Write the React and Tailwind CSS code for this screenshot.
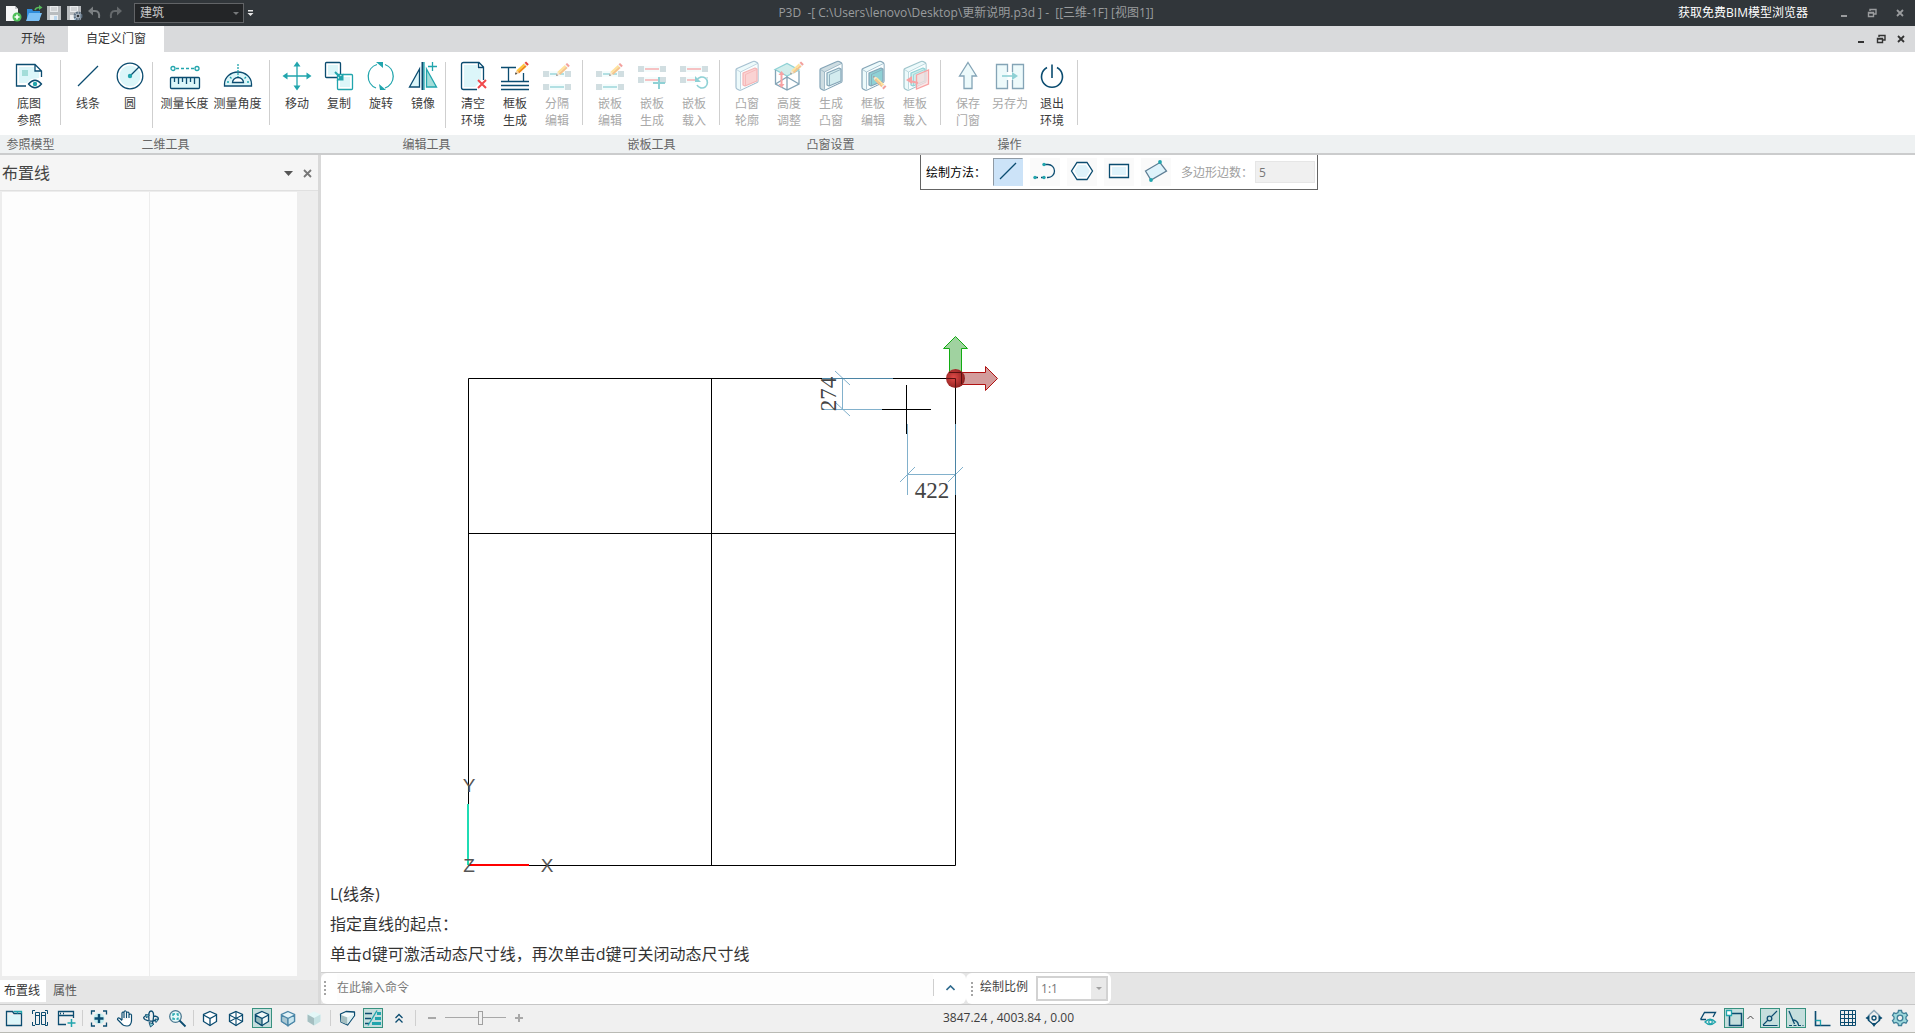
import React, { useState } from "react";
import clsx from "clsx";

const NAVY = "#0b4c70", TEAL = "#21a5ad", LIGHT = "#dcf6f9", MINT = "#a3ddd9", RED = "#f0494b";

function Svg({ size = 32, className, children }) {
  return (
    <svg width={size} height={size} viewBox={`0 0 ${size} ${size}`} fill="none" stroke={NAVY} strokeWidth="1.3" className={clsx("shrink-0", className)} aria-hidden="true">
      {children}
    </svg>
  );
}

/* ---------- shared icon pieces ---------- */
function Pencil({ x, y, down }) {
  return (
    <g transform={`translate(${x} ${y}) rotate(${down ? 45 : -43})`} stroke="none">
      <path d="M0 0 L4 -2 V2 Z" fill="#f4cfa0" />
      <path d="M0 0 L2 -1.2 V1.2 Z" fill="#2d3338" />
      <path d="M4 -2H14V0H4Z" fill="#ffc83c" />
      <path d="M4 0H14V2H4Z" fill="#f08b1b" />
      <path d="M14 -2h1v4h-1z" fill="#e8e8e8" />
      <path d="M15 -2h2v4h-2z" fill="#e8433c" />
    </g>
  );
}

function Blocks({ y1, y2, line1 = TEAL, line2 = TEAL }) {
  return (
    <g stroke="none">
      {[y1, y2].map((y, i) => (
        <g key={y}>
          <path d={`M8 ${y}h16v6h-16z`} fill="#eafafa" />
          <path d={`M2 ${y}h6v6h-6zM24 ${y}h6v6h-6z`} fill="#a5bfc5" />
          <path d={`M9 ${y + 3}H23`} stroke={i ? line2 : line1} strokeWidth="1.3" />
        </g>
      ))}
    </g>
  );
}

function Slab({ side = LIGHT, inner = MINT, edge = NAVY, innerEdge = TEAL }) {
  return (
    <g strokeLinejoin="round" strokeWidth="1.2">
      <path d="M5 10Q5 9 6 8.500L22 1.500Q23 1 24 1.500L26 2.500Q27 3 27 4.500V21Q27 22 26 22.500L10 30Q9 30.500 8 30L6 29Q5 28.500 5 27Z" fill={side} stroke={edge} />
      <path d="M10 12L26.500 4V21.500L10 29.500Z" fill="#f4fdfe" stroke="none" />
      <path d="M9.500 29V12L5.500 9.500M9.500 12L26.500 3.500" stroke={edge} strokeWidth="0.600" />
      <path d="M12 13L24 8L26 9V21L14 26L12 25Z" fill={inner} stroke={innerEdge} />
      <path d="M14.500 26V14.500L25.500 9.500" stroke={innerEdge} strokeWidth="0.800" />
    </g>
  );
}

/* ---------- ribbon icons ---------- */
const ribbonIcons = {
  underlay: <><path d="M6 7h16v5h4v6l-8 1-4 4H6z" fill={LIGHT} stroke="none" /><path d="M13 26H3.500V4.500H22L28.500 11V17M22 4.500V11H28.500" /><path d="M9 10h6v6H9z" fill={MINT} stroke="none" /><path d="M15.500 24Q22 16.500 28.500 24Q22 31.500 15.500 24Z" fill="#fff" /><circle cx="22" cy="24" r="2.200" fill={TEAL} stroke="none" /></>,
  line: <path d="M6 26L26 6" />,
  circle: <><circle cx="16" cy="16" r="12.800" fill="#fff" /><circle cx="16" cy="16" r="10.500" fill={LIGHT} stroke="none" /><path d="M16 16L25 7" /><circle cx="16" cy="16" r="2.200" fill={TEAL} stroke="none" /></>,
  length: <><rect x="1.500" y="17.500" width="29" height="11" rx="1" fill={LIGHT} /><path d="M5.500 18v4M9.500 18v6M13.500 18v4M17.500 18v6M21.500 18v4M25.500 18v6" /><g stroke={TEAL}><circle cx="4" cy="8.500" r="2" /><circle cx="28" cy="8.500" r="2" /><path d="M7 8.500H25" strokeDasharray="3 2" /></g></>,
  angle: <><path d="M2.500 26V24A13.500 12 0 0 1 29.500 24V26Z" fill={LIGHT} /><path d="M10.500 22.500A5.500 5 0 0 1 21.500 22.500Z" fill="#fff" /><path d="M16 4V17" stroke={TEAL} strokeDasharray="2 1" /><path d="M5 22h2M27 22h-2M8 17l1.500 1.500M24 17l-1.500 1.500" stroke={TEAL} /></>,
  move: <><path d="M16 4V28M4 16H28" stroke={TEAL} /><path d="M16 1.500l3.500 5h-7zM16 30.500l3.500-5h-7zM1.500 16l5-3.500v7zM30.500 16l-5-3.500v7z" fill={TEAL} stroke="none" /></>,
  copy: <><rect x="2.500" y="2.500" width="15" height="15" rx="1" fill="#fff" /><path d="M5 5h10v10H5z" fill={LIGHT} stroke="none" /><rect x="14.500" y="14.500" width="15" height="15" rx="1" fill="#fff" stroke={TEAL} /><path d="M17 17h10v10H17z" fill={LIGHT} stroke="none" /><path d="M12 12L18 18" stroke={TEAL} strokeWidth="2" /><path d="M20.500 20.500v-7l-7 7z" fill={TEAL} stroke="none" /></>,
  rotate: <g stroke={TEAL}><path d="M11 28A12.500 12.500 0 0 1 12 4.500M20 4.500A12.500 12.500 0 0 1 20 28" /><path d="M11 2h7v6zM21 30h-6l-1-6z" fill={TEAL} stroke="none" /></g>,
  mirror: <><path d="M2.500 27L12.500 9V27Z" fill={LIGHT} /><path d="M15.500 2V30" strokeWidth="2" /><path d="M17 2V30" stroke={TEAL} /><path d="M19.500 9L29.500 27H19.500Z" fill={MINT} stroke={TEAL} /><path d="M25.500 2v9M21 6.500h9" stroke={TEAL} /></>,
  clear: <><path d="M7 5h13v4h4v12l-6 6H7z" fill={LIGHT} stroke="none" /><path d="M20 29.500H6.500Q4.500 29.500 4.500 27.500V4.500Q4.500 2.500 6.500 2.500H22L26.500 7V20M21.500 3V7.500H26" /><path d="M21 20l8 8M29 20l-8 8" stroke={RED} strokeWidth="2" /></>,
  frame: <><path d="M2 7.500H17M9.500 7.500V21M24.500 13V21M2 21.500H30M2 25.500H30M2 29.500H30" /><Pencil x={16} y={14.500} /></>,
  split: <><Blocks y1={11} y2={24} /><Pencil x={15} y={16} /></>,
  panelEdit: <><Blocks y1={11} y2={24} /><Pencil x={15} y={16} /></>,
  panelMake: <><Blocks y1={6} y2={17} line1={RED} line2={RED} /><path d="M23 17v12M17 23h12" stroke={TEAL} strokeWidth="2" /></>,
  panelLoad: <><Blocks y1={6} y2={17} line1={RED} line2={RED} /><circle cx="24" cy="23" r="7" fill="#fff" stroke="none" /><path d="M19 20A5.500 5.500 0 1 1 19 25" stroke={TEAL} strokeWidth="1.600" /><path d="M17 16v6h6z" fill={TEAL} stroke="none" /></>,
  bayOutline: <Slab inner="#f7a9a9" innerEdge="#ee6a6c" edge="#4f83a3" />,
  bayHeight: <><path d="M2 9.500L14 3.500L26 10L14 16Z" fill={MINT} stroke={TEAL} /><path d="M2.500 10V24L14 30L26 24V11M14 16V30M2.500 24L14 17L26 24" /><path d="M8.500 13V26" stroke={RED} strokeWidth="2" /><path d="M8.500 11l3 4h-6zM8.500 28l3-4h-6z" fill={RED} stroke="none" /><Pencil x={17} y={14.500} /></>,
  bayMake: <Slab side="#9fbcc6" inner="#a9dbe0" innerEdge={NAVY} />,
  bayEdit: <><Slab inner={TEAL} innerEdge={NAVY} /><Pencil x={16} y={16} down /></>,
  bayLoad: <><Slab edge="#3f8a98" /><path d="M17.500 15L29.500 10V24L17.500 29Z" fill="#f9b9ba" fillOpacity="0.700" stroke={RED} /><path d="M19 23L11 21" stroke={RED} strokeWidth="2" /><path d="M7 20l6-4v8z" fill={RED} stroke="none" /></>,
  save: <path d="M16 2.500L24.500 16H20V28.500H12V16H7.500Z" fill={LIGHT} />,
  saveAs: <><path d="M13.500 12V4.500H2.500V28.500H13.500V20M18.500 12V4.500H29.500V28.500H18.500V20" fill={LIGHT} /><path d="M8 16H20" stroke={TEAL} strokeWidth="1.600" /><path d="M24 16l-6-4v8z" fill={TEAL} stroke="none" /></>,
  exit: <path d="M11 7.500A10.500 10.500 0 1 0 21 7.500M16 4.500V18" strokeWidth="1.600" />,
};

const ribbonGroups = [
  { title: "参照模型", first: true, sets: [[["underlay", "底图", "参照"]]] },
  { title: "二维工具", sets: [[["line", "线条"], ["circle", "圆"]], [["length", "测量长度"], ["angle", "测量角度"]]] },
  { title: "编辑工具", sets: [[["move", "移动"], ["copy", "复制"], ["rotate", "旋转"], ["mirror", "镜像"]], [["clear", "清空", "环境"], ["frame", "框板", "生成"], ["split", "分隔", "编辑", true]]] },
  { title: "嵌板工具", sets: [[["panelEdit", "嵌板", "编辑", true], ["panelMake", "嵌板", "生成", true], ["panelLoad", "嵌板", "载入", true]]] },
  { title: "凸窗设置", sets: [[["bayOutline", "凸窗", "轮廓", true], ["bayHeight", "高度", "调整", true], ["bayMake", "生成", "凸窗", true], ["bayEdit", "框板", "编辑", true], ["bayLoad", "框板", "载入", true]]] },
  { title: "操作", sets: [[["save", "保存", "门窗", true], ["saveAs", "另存为", "", true], ["exit", "退出", "环境"]]] },
];

function RibbonButton({ icon, top, bottom, disabled }) {
  return (
    <button type="button" disabled={disabled}
            className={clsx("flex flex-col items-center text-xs leading-[17px] whitespace-nowrap", top.length > 3 ? "w-[53px]" : "w-[42px]", disabled ? "text-[#a9a9a9]" : "text-[#3c3c3c]")}>
      <Svg className={disabled ? "opacity-50" : ""}>{ribbonIcons[icon]}</Svg>
      <span className="mt-[3px]">{top}</span>
      {bottom && <span>{bottom}</span>}
    </button>
  );
}

function Ribbon() {
  return (
    <div className="flex shrink-0 border-b-2 border-[#cbcccd] bg-white">
      {ribbonGroups.map((g) => (
        <section key={g.title} className="flex flex-col">
          <div className="flex h-[83px] pt-2">
            {g.sets.map((set, i) => (
              <div key={i} className={clsx("flex", g.first ? "pr-[10px] pl-2" : i === g.sets.length - 1 ? (g.title === "二维工具" ? "px-[5px]" : "pr-1 pl-[6px]") : "pr-px pl-[6px]")}>
                {set.map(([icon, top, bottom, off]) => <RibbonButton key={icon} icon={icon} top={top} bottom={bottom} disabled={off} />)}
              </div>
            )).flatMap((el, i) => i ? [<span key={"s" + i} className="mt-[2px] h-[66px] w-px bg-[#cfcfcf]" />, el] : [el])}
            <span className="h-[65px] w-px bg-[#cfcfcf]" />
          </div>
          <h2 className="h-[18px] bg-[#eef1f2] text-center text-xs leading-[19px] text-[#666]">{g.title}</h2>
        </section>
      ))}
      <div className="mt-[83px] h-[18px] flex-1 bg-[#eef1f2]" />
    </div>
  );
}

/* ---------- title bar ---------- */
function WindowButtons({ className, gap }) {
  return (
    <div className={clsx("flex items-center", gap, className)}>
      <button type="button" aria-label="最小化"><svg width="10" height="10"><path d="M2 7h6v2H2z" fill="currentColor" /></svg></button>
      <button type="button" aria-label="还原"><svg width="10" height="10" fill="none" stroke="currentColor"><path d="M3 3V1.500H9V6H7M3 1.500H9" strokeWidth="1.400" /><path d="M1.500 4.500h5v4h-5zM1.500 5h5" strokeWidth="1.400" /></svg></button>
      <button type="button" aria-label="关闭"><svg width="10" height="10" fill="none" stroke="currentColor" strokeWidth="1.800"><path d="M2 2l6 6M8 2l-6 6" /></svg></button>
    </div>
  );
}

function Floppy({ gear }) {
  return <>
    <path d="M0 1h14v14H0z" fill="#b9bcbf" stroke="none" />
    <path d="M3 1h8v6H3z" fill="#e8eaec" stroke="none" /><path d="M4 3h6M4 5h6" stroke="#b9bcbf" strokeWidth="1" />
    <path d="M3 10h8v5H3z" fill="#eceef0" stroke="none" /><path d="M7 11h3v4H7z" fill="#bcd7ee" stroke="none" />
    {gear && <><circle cx="11" cy="11" r="3.500" fill="#aeb9c5" stroke="#5d6f80" strokeWidth="2" strokeDasharray="2 0.800" /><circle cx="11" cy="11" r="1.300" fill="#33373a" stroke="none" /></>}
  </>;
}

function TitleBar() {
  return (
    <header className="flex h-[26px] shrink-0 items-center bg-[#31363a] text-xs text-[#9a9c9e]">
      <div className="flex items-center gap-1 pl-[5px]">
        <button type="button" aria-label="新建"><Svg size={17}><path d="M1 1h9l3 3v12H1z" fill="#f5f6f7" stroke="none" /><path d="M10 1v3h3z" fill="#c6c9cc" stroke="none" /><circle cx="12" cy="12" r="4.500" fill="#4fbf5a" stroke="none" /><path d="M12 9.500v5M9.500 12h5" stroke="#fff" strokeWidth="1.600" /></Svg></button>
        <button type="button" aria-label="打开"><Svg size={17}><path d="M1 4h5l1 2h7v9H1z" fill="#2f8cdb" stroke="none" /><path d="M3 8h13l-3 8H0z" fill="#7cc0f5" stroke="none" /><path d="M9 5Q10 2 14 2.500" stroke="#58b95c" strokeWidth="1.600" /><path d="M13 0l3.500 2.500L13 5z" fill="#58b95c" stroke="none" /></Svg></button>
        <button type="button" aria-label="保存"><Svg size={16}><Floppy /></Svg></button>
        <button type="button" aria-label="另存"><Svg size={16}><Floppy gear /></Svg></button>
        <button type="button" aria-label="撤销"><Svg size={16}><path d="M4 6H8Q13 6 12 13" stroke="#7b7f82" strokeWidth="2" /><path d="M1 6l5-4.500v9z" fill="#7b7f82" stroke="none" /></Svg></button>
        <button type="button" aria-label="重做"><Svg size={16}><path d="M12 6H8Q3 6 4 13" stroke="#65696c" strokeWidth="2" /><path d="M15 6l-5-4.500v9z" fill="#65696c" stroke="none" /></Svg></button>
      </div>
      <div className="relative ml-[11px] w-[110px]">
        <select aria-label="专业" defaultValue="建筑" className="h-5 w-full appearance-none border border-[#626467] bg-[#232527] pl-[5px] text-xs leading-4 text-[#c8c8c8]">
          <option>建筑</option>
          <option>结构</option>
        </select>
        <span className="pointer-events-none absolute top-[9px] right-[5px] border-x-[3px] border-t-[3px] border-x-transparent border-t-[#77797b]" />
      </div>
      <button type="button" aria-label="自定义快速访问" className="ml-[3px]"><svg width="7" height="8"><path d="M1 1h5v1.500H1zM0.500 4h6l-3 3z" fill="#e6e6e6" /></svg></button>
      <h1 className="flex-1 text-center whitespace-pre">P3D  -[ C:\Users\lenovo\Desktop\更新说明.p3d ] -  [[三维-1F] [视图1]]</h1>
      <a href="#viewer" className="text-white">获取免费BIM模型浏览器</a>
      <WindowButtons className="pr-[10px] pl-[31px]" gap="gap-[18px]" />
    </header>
  );
}

/* ---------- left panel ---------- */
function SidePanel() {
  const [tab, setTab] = useState("布置线");
  return (
    <aside className="flex w-[318px] shrink-0 flex-col bg-[#ededed]">
      <div className="flex h-9 shrink-0 items-center border-b border-[#e0e0e0] bg-[#f5f5f5] pt-px pl-[2px] text-[#444]">
        <h2 className="flex-1 text-base">布置线</h2>
        <button type="button" aria-label="面板菜单" className="mr-[10px]"><svg width="9" height="5"><path d="M0 0h9L4.500 5z" fill="#555" /></svg></button>
        <button type="button" aria-label="关闭面板" className="mr-[6px]"><svg width="9" height="9" stroke="#777" strokeWidth="1.800"><path d="M1 1l7 7M8 1l-7 7" /></svg></button>
      </div>
      <div className="mt-px mr-[21px] mb-1 ml-[2px] grid flex-1 grid-cols-2 bg-[#fdfdfd]">
        <div className="border-r border-[#ededed]" />
        <div />
      </div>
      <div className="flex h-6 shrink-0 bg-[#e5e5e5] pb-[2px] text-xs">
        {["布置线", "属性"].map((t) => (
          <button key={t} type="button" onClick={() => setTab(t)} className={clsx(t === "布置线" ? "w-[46px] pr-[2px]" : "w-[38px]", tab === t ? "bg-white text-[#333]" : "text-[#555]")}>{t}</button>
        ))}
      </div>
    </aside>
  );
}

/* ---------- drawing area ---------- */
const drawTools = [
  ["直线", <path d="M7 22L23 6" />],
  ["弧线", <><path d="M4 20.500H13" strokeDasharray="4 3" /><path d="M14 7.500H18A6.500 6.500 0 0 1 18 20.500H17" /><g fill={TEAL} stroke="none"><circle cx="5" cy="20.500" r="1.700" /><circle cx="14" cy="20.500" r="1.700" /><circle cx="14" cy="7.500" r="1.700" /></g></>],
  ["多边形", <><path d="M10 5.500H20L25.500 14L20 22.500H10L4.500 14Z" fill="#fff" /><path d="M11 8H19L23 14L19 20H11L7.500 14Z" fill="#dff3fb" stroke="none" /></>],
  ["矩形", <><path d="M5.500 7.500h19v13h-19z" fill="#fff" /><path d="M8 10h14v8H8z" fill="#dff3fb" stroke="none" /></>],
  ["斜矩形", <><path d="M4.500 14L19 5.500L25.500 14L10 23Z" fill="#dff3fb" stroke="#5f7f95" /><circle cx="19" cy="5" r="1.900" fill={TEAL} stroke="none" /><circle cx="10" cy="23" r="1.900" fill={TEAL} stroke="none" /></>],
];

function DrawBar() {
  const [tool, setTool] = useState("直线");
  return (
    <div className="absolute top-0 left-[599px] flex h-[35px] w-[398px] items-center border border-t-0 border-[#646464] bg-white pl-[5px] text-xs text-black">
      <span className="w-[67px] pt-[2px] whitespace-nowrap">绘制方法：</span>
      <div className="flex gap-[7px]">
        {drawTools.map(([name, shape]) => (
          <button key={name} type="button" aria-label={name} onClick={() => setTool(name)}
                  className={clsx("flex h-7 w-[30px] items-center justify-center border", tool === name ? "border-t-[#8f9aa5] border-r-[#cce3f8] border-b-[#cce3f8] border-l-[#8f9aa5] bg-[#cce3f8]" : "border-transparent bg-[#fafafa]")}>
            <Svg size={30}>{shape}</Svg>
          </button>
        ))}
      </div>
      <label htmlFor="sides" className="ml-[10px] pt-[2px] whitespace-nowrap text-[#a0a0a0]">多边形边数：</label>
      <input id="sides" disabled defaultValue="5" className="ml-[2px] h-[22px] w-[60px] border border-[#e6e6e6] bg-[#f0f0f0] px-[3px] text-xs text-[#777]" />
    </div>
  );
}

function Drawing() {
  return (
    <svg className="absolute inset-0 h-full w-full" fill="none">
      <defs>
        <radialGradient id="ball" cx="40%" cy="45%" r="60%">
          <stop offset="0" stopColor="#e04a48" />
          <stop offset="1" stopColor="#8c1f1e" />
        </radialGradient>
      </defs>
      <path d="M147.500 223.500H634.500V710.500H147.500ZM390.500 223.500V710.500M147.500 378.500H634.500" stroke="#000" />
      {/* dynamic dimensions */}
      <g stroke="#82b1cc">
        <path d="M501 254.500H561M521.500 223V255M514 216L529 230M514 247L529 261" />
        <path d="M586.500 269V340M586 319.500H635M579 327L594 312M627 327L642 312" />
        <path d="M501 223.500H572M634.500 269V340" stroke="#4b84a4" />
      </g>
      <path d="M585.500 230V279M561 254.500H610" stroke="#000" />
      <g fill="#444" fontFamily="'Liberation Serif', serif" fontSize="23" textAnchor="middle">
        <text x="611" y="343">422</text>
        <text transform="translate(515 239) rotate(-90)">274</text>
      </g>
      {/* gizmo */}
      <path d="M628.500 217V193.500H622.500L634.500 181.500L646.500 193.500H640.500V217Z" fill="#a0d2a0" stroke="#12ac12" />
      <path d="M640 217.500H664.500V211.500L676.500 223.500L664.500 235.500V229.500H640Z" fill="#d39c9c" stroke="#b01212" />
      <circle cx="634.500" cy="223.500" r="9.500" fill="url(#ball)" />
      <path d="M625 223.500H634.500V233M628 217.500H640.500V229" stroke="#5a1010" />
      {/* axes */}
      <path d="M147 649V710" stroke="#1fdcb4" strokeWidth="2" />
      <path d="M148 710H208" stroke="#f00" strokeWidth="2" />
      <g fill="#555" fontFamily="'Liberation Sans', sans-serif" fontSize="19" textAnchor="middle">
        <text x="148" y="637">Y</text>
        <text x="226" y="717">X</text>
        <text x="148" y="717">Z</text>
      </g>
    </svg>
  );
}

function Grip() {
  return <svg width="2" height="14" className="shrink-0"><path d="M0 0h2v2H0zM0 4h2v2H0zM0 8h2v2H0zM0 12h2v2H0z" fill="#a5a5a5" /></svg>;
}

function CommandBar() {
  return (
    <div className="flex h-8 shrink-0 border-t border-[#cfcfcf] bg-[#e5e5e5] text-xs">
      <div className="flex w-[645px] items-center rounded-md bg-white pb-[2px] pl-[3px]">
        <Grip />
        <input aria-label="命令" placeholder="在此输入命令" className="ml-[11px] h-7 flex-1 bg-[#fdfdfd] text-xs outline-none placeholder:text-[#777]" />
        <span className="h-[17px] w-px bg-[#cfcfcf]" />
        <button type="button" aria-label="展开" className="flex w-8 justify-center"><svg width="9" height="6" fill="none" stroke="#2e6a8e" strokeWidth="1.600"><path d="M0.500 5L4.500 1L8.500 5" /></svg></button>
      </div>
      <div className="flex w-[145px] items-center rounded-md bg-white pl-[5px]">
        <Grip />
        <label htmlFor="scale" className="ml-[7px] pb-1 text-[#444]">绘制比例</label>
        <div className="relative ml-2 flex-1 pr-[3px]">
          <select id="scale" disabled defaultValue="1:1" className="h-[25px] w-full appearance-none border-2 border-[#d2d2d2] bg-white pl-[3px] text-xs text-[#777] opacity-100">
            <option>1:1</option>
          </select>
          <span className="pointer-events-none absolute top-[2px] right-[5px] flex h-[21px] w-[15px] items-center justify-center bg-[#e9e9e9]"><span className="border-x-[3px] border-t-[3px] border-x-transparent border-t-[#a0a0a0]" /></span>
        </div>
      </div>
    </div>
  );
}

/* ---------- status bar ---------- */
const cube = "M10 3.500L16.500 6.500V13.500L10 17.500L3.500 13.500V6.500Z";
const statusLeft = [
  [
    ["图层", <><path d="M4 7h12v9H4z" fill={LIGHT} stroke="none" /><path d="M2.500 3.500H8.500L10 5.500H17.500V17.500H2.500Z" /><path d="M9.500 3.500h8v2M13.500 3.500v2" stroke={TEAL} /></>],
    ["并排", <><path d="M5.500 4.500h4v12h-4zM11.500 4.500h4v12h-4zM5.500 7.500h4M11.500 7.500h4M5 2.500H2.500V6M2.500 14v3.500H5M15 2.500h2.500V6M17.500 14v3.500H15" strokeWidth="1" /></>],
    ["新建视图", <><path d="M10 16.500H2.500V3.500H17.500V10M2.500 7.500H17.500M4 5.500h1M7 5.500h1" /><path d="M15.500 11v8M11.500 15h8" stroke={TEAL} strokeWidth="1.500" /></>],
  ],
  [
    ["全图", <><circle cx="10" cy="10.500" r="5.500" fill="#c4edf0" stroke="none" /><path d="M6 3H2.500V6.500M14 3h3.500V6.500M6 18H2.500V14.500M14 18h3.500V14.500" /><path d="M10 6v9M5.500 10.500h9" strokeWidth="2.400" /></>],
    ["平移", <path d="M7 12V5Q8 3 9 5V10M9 10V4Q10 1.500 11.500 4V10M11.500 10V5Q13 3 14 5V10M14 10V7Q15.500 5 16.500 7V13Q16 18 12 18Q8 18 6 15L2.500 11.500Q2.500 9 5 10.500L7 12.500" fill="#fff" strokeWidth="1.200" />],
    ["环绕", <><path d="M8 12Q7 3 10 3T12.500 9Q12.500 12 11 17M5 7.500Q1 9.500 4 11.500Q8 14 14 12.500Q19 11 16.500 9Q15 8 12 8" fill="none" /><path d="M4.500 6.500l4 0.500-3 3zM14 11l3.500 0.500-2.500 3zM8 14.500l5 1.500-3.500 3z" fill="#8fd3d6" strokeWidth="0.900" /></>],
    ["缩放", <><circle cx="8.500" cy="8.500" r="5.800" fill="#e6f8f9" stroke="#4d7b93" /><path d="M12.500 12.500L18.500 18.500" strokeWidth="1.800" /><path d="M6 8V6h2M9.500 6H11v2M11 9.500V11H9.500M8 11H6V9.500" stroke={TEAL} /></>],
  ],
  [
    ["线框", <><path d={cube} fill="#fff" /><path d="M3.500 7L10 10.500L16.500 7M10 10.500V17.500" /></>],
    ["三维线框", <><path d={cube} fill="#fff" /><path d="M3.500 7L10 10.500L16.500 7M10 3.500V17.500M3.500 13.500L10 10L16.500 13.500" strokeWidth="1.100" /></>],
    ["消隐", <><path d={cube} fill="#eff8f8" /><path d="M3.500 7L10 10.500V17.500L3.500 13.500Z" fill="#94b9bb" /><path d="M10 10.500L16.500 7" /></>, true],
    ["着色", <g stroke="#4c87a8"><path d={cube} fill="#e3f3f8" /><path d="M3.500 7L10 10.500V17.500L3.500 13.500Z" fill="#a9c7d3" /><path d="M10 10.500L16.500 7V13.500L10 17.500Z" fill="#c9e6ef" /></g>],
    ["真实", <g stroke="none"><path d={cube} fill="#e3f7f7" /><path d="M3.500 6.500L10 10V17.500L3.500 13.500Z" fill="#a5bfc1" /><path d="M10 10L16.500 6.500V13.500L10 17.500Z" fill="#c5e2e3" /></g>],
  ],
  [
    ["剖切", <><path d="M3.500 6L9 3.500L17.500 4V7.500L10.500 17L4 14Z" fill="#f4fbfb" strokeLinejoin="round" /><path d="M4 7L10.500 9.500V16.500L4 14Z" fill="#a5bfc1" stroke="none" /><path d="M10.500 9.500L17 5V7.500L10.500 16.500Z" fill="#e0f1f3" stroke="none" /></>],
    ["线宽", <><path d="M2 5.500h7M2 10.500h6M2 15.500h4" strokeWidth="1.600" /><path d="M14 5.500h4M12 10.500h6M9 15.500h9" stroke={TEAL} strokeWidth="3" /><path d="M5 17.500L14 2.500" stroke={TEAL} /></>, true],
    ["更多", <path d="M6.500 10L10 6.500L13.500 10M6.500 14.500L10 11L13.500 14.500" />],
  ],
];

const statusRight = [
  ["工作平面", <><path d="M2.500 11.500L6.500 4.500H17.500L15 9M8 11.500H2.500" /><path d="M7 14Q12 8.500 17.500 14Q12 19 7 14Z" stroke={TEAL} /><circle cx="12.500" cy="14" r="1.800" stroke={TEAL} /></>],
  ["对象捕捉", <><path d="M5.500 5.500h12v12h-12z" strokeWidth="1.500" /><path d="M2.500 2.500h5v5h-5z" fill="#fff" stroke={TEAL} /></>, true],
  ["极轴", <><path d="M3 17.500H17.500M3 17L8 12M11.500 8.500L17 3" strokeWidth="1.100" /><circle cx="9.500" cy="10.500" r="2.300" fill="#c5dedd" /></>, true],
  ["角度", <><path d="M3 3L8.500 16" /><path d="M3 17.500H17.500" strokeDasharray="3 1.500" strokeWidth="1" /><path d="M6.500 12Q11.500 12 12.500 17" /></>, true],
  ["正交", <><path d="M3.500 3V17.500H18.500" strokeWidth="1.600" /><path d="M3.500 12.500h5v5" stroke={TEAL} /></>],
  ["栅格", <path d="M2.500 2.500h15v15h-15zM6.500 2.500v15M10.500 2.500v15M14.500 2.500v15M2.500 6.500h15M2.500 10.500h15M2.500 14.500h15" strokeWidth="1" />],
  ["动态输入", <><path d="M4 8L10 2.500L16 8" stroke="#8aa6b8" /><path d="M4 12L10 17L16 12" /><circle cx="10" cy="10" r="2" /><path d="M1.500 10l4-3v6zM18.500 10l-4-3v6zM7.500 15l2.500 4 2.500-4z" fill={NAVY} stroke="none" /></>],
  ["设置", <><path d="M8.500 2.500h3l0.500 2 2 1 2-0.700 1.500 2.600-1.500 1.500v2.200l1.500 1.500-1.500 2.600-2-0.700-2 1-0.500 2h-3l-0.500-2-2-1-2 0.700-1.500-2.600 1.500-1.500V8.900L2.500 7.400 4 4.800l2 0.700 2-1z" fill="#9fdadd" stroke="#3f7f98" /><circle cx="10" cy="10" r="2.800" fill="#f0f0f0" stroke="#3f7f98" /></>],
];

function StatusButton({ name, active, children }) {
  return (
    <button type="button" aria-label={name} className="flex w-[26px] justify-center">
      <span className={clsx("flex h-5 w-5 items-center justify-center", active && "bg-[#c5dedd] outline outline-[#37917f] -outline-offset-1")}><Svg size={20}>{children}</Svg></span>
    </button>
  );
}

function StatusBar() {
  return (
    <footer className="flex h-[29px] shrink-0 items-center border-t border-b border-t-[#c6c6c6] border-b-[#b9bab4] bg-[#f0f0f0] pb-[2px] text-xs text-[#3c3c3c]">
      <div className="flex items-center pl-px">
        {statusLeft.map((group, i) => (
          <div key={i} className="flex items-center">
            {group.map(([name, shape, active]) => <StatusButton key={name} name={name} active={active}>{shape}</StatusButton>)}
            <span className="mx-[3px] h-4 w-px bg-[#cfcfcf]" />
          </div>
        ))}
        <span className="ml-[9px] h-[2px] w-2 bg-[#a8a8a8]" />
        <input type="range" aria-label="缩放比例" defaultValue="59"
               className="mx-[9px] h-4 w-[61px] appearance-none bg-[linear-gradient(#a8a8a8,#a8a8a8)] bg-[length:100%_1px] bg-center bg-no-repeat [&::-webkit-slider-thumb]:h-[14px] [&::-webkit-slider-thumb]:w-[5px] [&::-webkit-slider-thumb]:appearance-none [&::-webkit-slider-thumb]:border [&::-webkit-slider-thumb]:border-[#a0a0a0] [&::-webkit-slider-thumb]:bg-[#f0f0f0]" />
        <svg width="8" height="8"><path d="M3 0h2v3h3v2H5v3H3V5H0V3h3z" fill="#a8a8a8" /></svg>
      </div>
      <output className="flex-1 pl-[420px] whitespace-pre">3847.24 , 4003.84 , 0.00</output>
      <div className="flex items-center pr-[2px]">
        {statusRight.map(([name, shape, active]) => (
          <div key={name} className="flex items-center">
            <StatusButton name={name} active={active}>{shape}</StatusButton>
            {name === "对象捕捉" && <button type="button" aria-label="捕捉选项" className="mr-[3px]"><svg width="7" height="5" fill="none" stroke="#444"><path d="M0.500 4L3.500 1L6.500 4" /></svg></button>}
          </div>
        ))}
      </div>
    </footer>
  );
}

export default function App() {
  return (
    <div className="flex h-screen flex-col overflow-hidden bg-[#f0f0f0] font-['Open_Sans','Noto_Sans_CJK_SC',sans-serif]">
      <TitleBar />
      <nav className="flex h-[26px] shrink-0 items-stretch bg-[#d9dadc] text-xs text-[#333]">
        <button type="button" className="w-[68px] pr-[2px]">开始</button>
        <button type="button" className="w-24 bg-white">自定义门窗</button>
        <WindowButtons className="ml-auto pr-[9px]" gap="gap-[10px]" />
      </nav>
      <Ribbon />
      <div className="flex min-h-0 flex-1">
        <SidePanel />
        <main className="flex min-w-0 flex-1 flex-col border-l-[3px] border-[#d9d9d9]">
          <div className="relative flex min-h-0 flex-1 flex-col justify-end overflow-hidden bg-white">
            <Drawing />
            <DrawBar />
            <div className="relative pb-[3px] pl-[9px] text-base leading-[30px] text-[#333]">
              <p>L(线条)</p>
              <p>指定直线的起点：</p>
              <p>单击d键可激活动态尺寸线，再次单击d键可关闭动态尺寸线</p>
            </div>
          </div>
          <CommandBar />
        </main>
      </div>
      <StatusBar />
    </div>
  );
}
